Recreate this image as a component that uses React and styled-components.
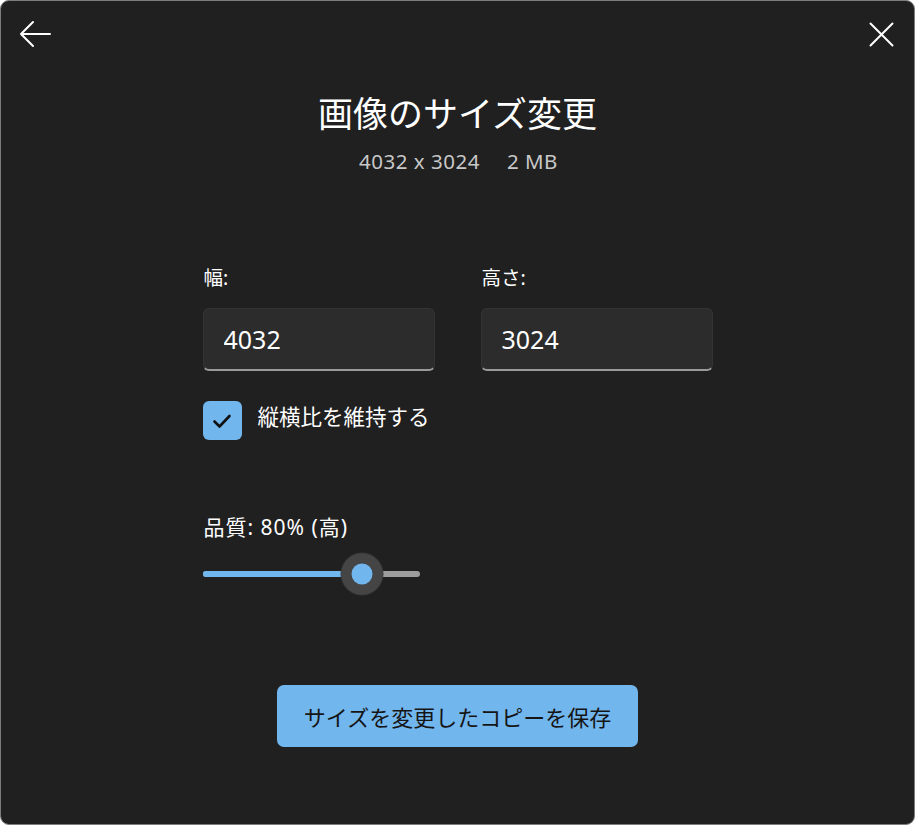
import React from "react";
import styled, { createGlobalStyle } from "styled-components";

const GlobalStyle = createGlobalStyle`
  html, body {
    margin: 0;
    padding: 0;
    background: #ffffff;
  }
  * {
    box-sizing: border-box;
  }
`;

const FONT = `"Noto Sans", "Noto Sans CJK JP", sans-serif`;

function BackIcon() {
  return (
    <svg width="34" height="28" viewBox="0 0 34 28" fill="none">
      <path
        d="M32 14H3M15 2L3 14l12 12"
        stroke="#ffffff"
        strokeWidth="2"
        strokeLinecap="round"
        strokeLinejoin="round"
      />
    </svg>
  );
}

function CloseIcon() {
  return (
    <svg width="25" height="25" viewBox="0 0 25 25" fill="none">
      <path
        d="M1.5 1.5l22 22M23.5 1.5l-22 22"
        stroke="#ffffff"
        strokeWidth="2"
        strokeLinecap="round"
      />
    </svg>
  );
}

function CheckIcon() {
  return (
    <svg width="20" height="16" viewBox="0 0 20 16" fill="none">
      <path
        d="M2.5 8.5l5 5L17.5 3"
        stroke="#111111"
        strokeWidth="2.6"
        strokeLinecap="round"
        strokeLinejoin="round"
      />
    </svg>
  );
}

function App() {
  const quality = 73.7;
  return (
    <>
      <GlobalStyle />
      <Window>
        <Toolbar>
          <IconButton aria-label="back">
            <BackIcon />
          </IconButton>
          <IconButton aria-label="close">
            <CloseIcon />
          </IconButton>
        </Toolbar>

        <Title>画像のサイズ変更</Title>
        <Meta>
          4032 x 3024<MetaSize>2 MB</MetaSize>
        </Meta>

        <Form>
          <Fields>
            <Field>
              <Label>幅:</Label>
              <Input defaultValue="4032" />
            </Field>
            <Field>
              <Label>高さ:</Label>
              <Input defaultValue="3024" />
            </Field>
          </Fields>

          <CheckRow>
            <CheckBox>
              <CheckIcon />
            </CheckBox>
            <CheckLabel>縦横比を維持する</CheckLabel>
          </CheckRow>

          <QualityLabel>品質: 80% (高)</QualityLabel>
          <Slider>
            <Track>
              <Fill style={{ width: `${quality}%` }} />
              <Thumb style={{ left: `${quality}%` }}>
                <ThumbDot />
              </Thumb>
            </Track>
          </Slider>
        </Form>

        <SaveButton>サイズを変更したコピーを保存</SaveButton>
      </Window>
    </>
  );
}

const Window = styled.div`
  width: 915px;
  height: 825px;
  background: #202020;
  border: 1px solid #7d7d7d;
  border-radius: 9px;
  display: flex;
  flex-direction: column;
  align-items: center;
  font-family: ${FONT};
  color: #ffffff;
  overflow: hidden;
`;

const Toolbar = styled.div`
  width: 100%;
  height: 66px;
  display: flex;
  align-items: center;
  justify-content: space-between;
  padding: 0 20px 0 17px;
`;

const IconButton = styled.button`
  background: none;
  border: none;
  padding: 0;
  display: flex;
  cursor: pointer;
`;

const Title = styled.h1`
  margin: 25px 0 0;
  font-size: 35px;
  line-height: 44px;
  font-weight: 400;
`;

const Meta = styled.div`
  margin-top: 12px;
  font-size: 20.5px;
  line-height: 26px;
  color: #c8c8c8;
  letter-spacing: 0.5px;
  padding-left: 2px;
`;

const MetaSize = styled.span`
  margin-left: 27px;
`;

const Form = styled.div`
  width: 510px;
  margin-top: 92px;
  display: flex;
  flex-direction: column;
`;

const Fields = styled.div`
  display: grid;
  grid-template-columns: 232px 232px;
  justify-content: space-between;
`;

const Field = styled.div`
  display: flex;
  flex-direction: column;
  gap: 18px;
`;

const Label = styled.label`
  font-size: 19.5px;
  line-height: 24px;
  color: #ffffff;
  padding-left: 1px;
`;

const Input = styled.input`
  height: 63px;
  width: 100%;
  background: #2c2c2c;
  border: 1px solid #333333;
  border-bottom: 2px solid #9a9a9a;
  border-radius: 6px;
  padding: 0 20px;
  font-family: ${FONT};
  font-size: 25px;
  color: #ffffff;
  outline: none;
`;

const CheckRow = styled.div`
  margin-top: 30px;
  display: flex;
  align-items: center;
  gap: 16px;
`;

const CheckBox = styled.div`
  width: 39px;
  height: 39px;
  border-radius: 6px;
  background: #72b6ee;
  display: flex;
  align-items: center;
  justify-content: center;
`;

const CheckLabel = styled.span`
  font-size: 21.5px;
  line-height: 28px;
  margin-top: -8px;
`;

const QualityLabel = styled.div`
  margin-top: 75px;
  font-size: 21px;
  line-height: 24px;
  padding-left: 1px;
  letter-spacing: 1px;
`;

const Slider = styled.div`
  width: 217px;
  height: 43px;
  margin-top: 13px;
  display: flex;
  align-items: center;
`;

const Track = styled.div`
  position: relative;
  width: 100%;
  height: 6px;
  border-radius: 3px;
  background: #9d9d9d;
`;

const Fill = styled.div`
  height: 100%;
  border-radius: 3px;
  background: #72b6ee;
`;

const Thumb = styled.div`
  position: absolute;
  top: 50%;
  width: 43px;
  height: 43px;
  border-radius: 50%;
  background: #454545;
  border: 1px solid #3a3a3a;
  transform: translate(-50%, -50%);
  display: flex;
  align-items: center;
  justify-content: center;
`;

const ThumbDot = styled.div`
  width: 21px;
  height: 21px;
  border-radius: 50%;
  background: #72b6ee;
`;

const SaveButton = styled.button`
  margin-top: 90px;
  width: 361px;
  height: 62px;
  border: none;
  border-radius: 7px;
  background: #72b6ee;
  font-family: ${FONT};
  font-size: 22px;
  color: #151515;
  cursor: pointer;
`;

export default App;
